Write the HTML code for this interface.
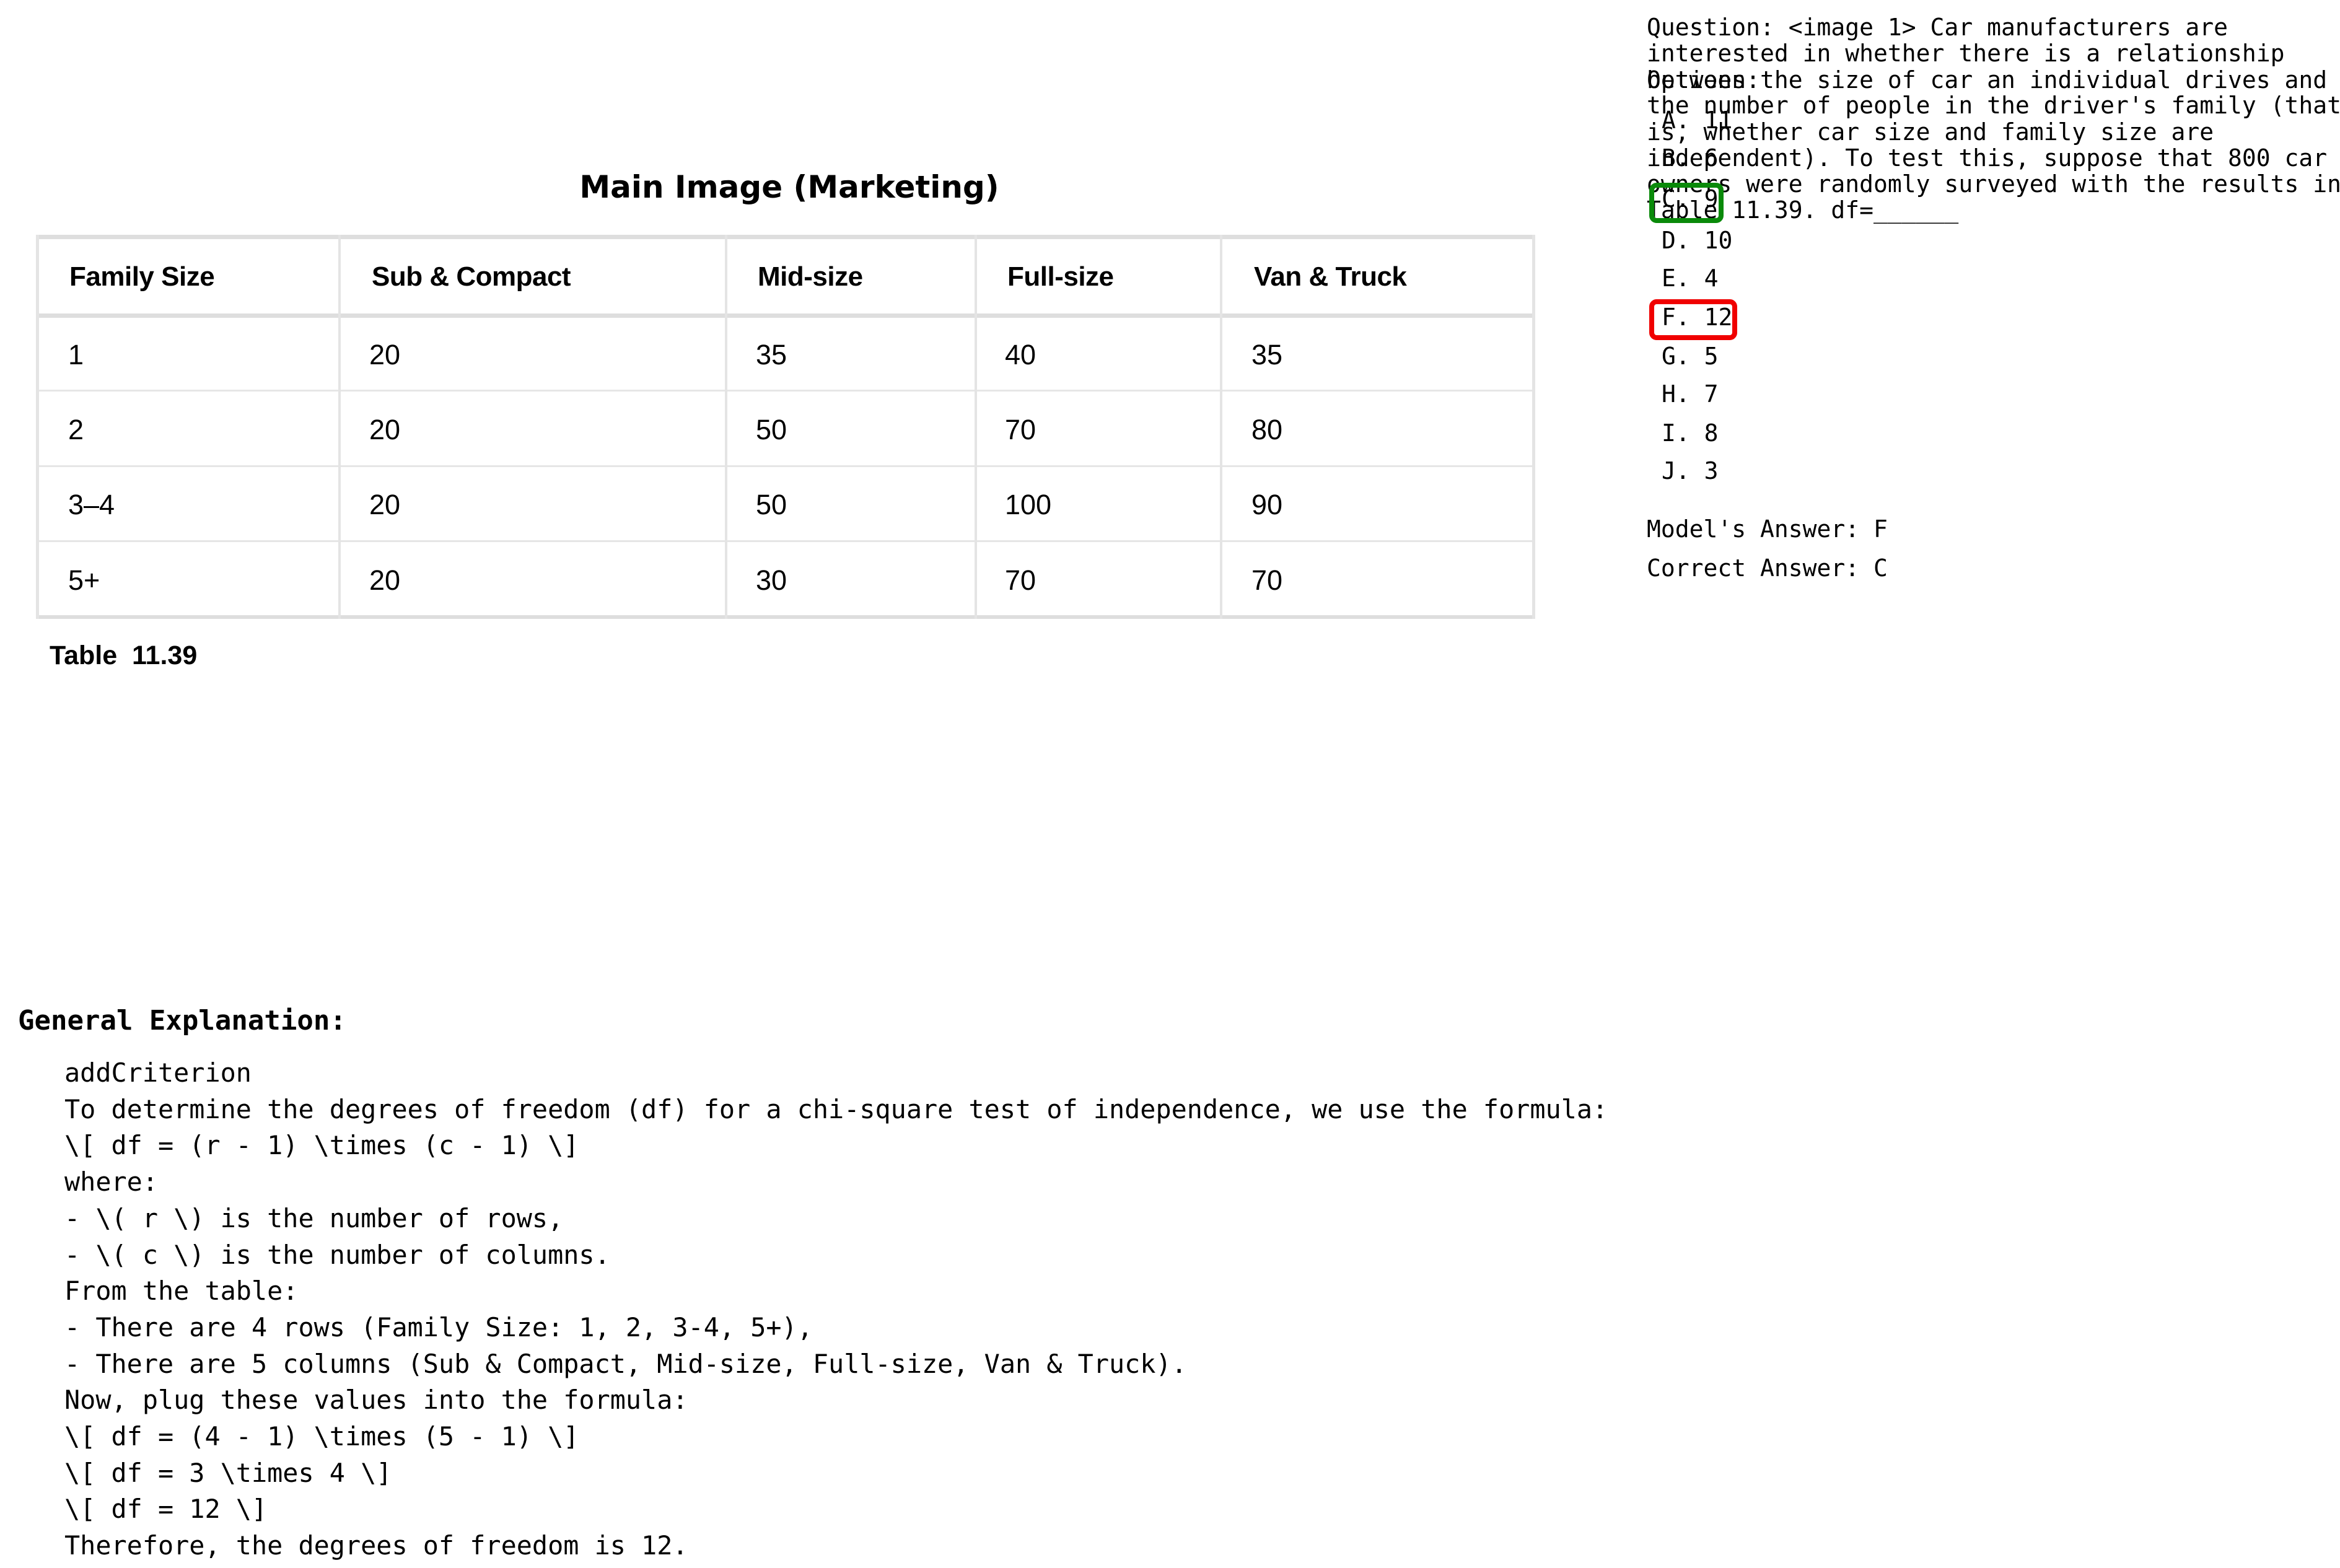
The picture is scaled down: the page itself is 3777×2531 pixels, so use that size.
<!DOCTYPE html>
<html><head><meta charset="utf-8"><style>
html,body{margin:0;padding:0;background:#fff;}
body{width:3777px;height:2531px;position:relative;overflow:hidden;color:#000;}
.a{position:absolute;white-space:pre;}
.m{font-family:"DejaVu Sans Mono","Liberation Mono",monospace;}
.t{font-family:"Liberation Sans",Arial,sans-serif;}
.hl{position:absolute;background:#dedede;}
.vl{position:absolute;background:#e4e4e4;}
.q{font-size:38px;line-height:42px;left:2658px;}
.o{font-size:38px;line-height:62px;left:2682px;}
.e{font-size:41.8px;line-height:58.7px;left:104px;}
.h{font-size:44px;font-weight:bold;line-height:60px;letter-spacing:-0.5px;}
.d{font-size:45px;line-height:60px;}
</style></head><body>
<div class="a" style="left:0;width:2548px;top:271px;text-align:center;font-family:'DejaVu Sans',sans-serif;font-weight:bold;font-size:50px;line-height:62px;">Main Image (Marketing)</div>

<div class="hl" style="left:58px;top:379px;width:2420px;height:7px;"></div>
<div class="hl" style="left:58px;top:506px;width:2420px;height:7px;"></div>
<div class="hl" style="left:58px;top:629px;width:2420px;height:3px;background:#e6e6e6"></div>
<div class="hl" style="left:58px;top:751px;width:2420px;height:3px;background:#e6e6e6"></div>
<div class="hl" style="left:58px;top:872px;width:2420px;height:3px;background:#e6e6e6"></div>
<div class="hl" style="left:58px;top:993px;width:2420px;height:6px;"></div>
<div class="vl" style="left:58px;top:379px;width:5px;height:620px;"></div>
<div class="vl" style="left:546px;top:379px;width:4px;height:620px;"></div>
<div class="vl" style="left:1170px;top:379px;width:4px;height:620px;"></div>
<div class="vl" style="left:1573px;top:379px;width:4px;height:620px;"></div>
<div class="vl" style="left:1969px;top:379px;width:4px;height:620px;"></div>
<div class="vl" style="left:2473px;top:379px;width:5px;height:620px;"></div>

<div class="a t h" style="left:112px;top:417px;">Family Size</div>
<div class="a t h" style="left:600px;top:417px;">Sub &amp; Compact</div>
<div class="a t h" style="left:1223px;top:417px;">Mid-size</div>
<div class="a t h" style="left:1626px;top:417px;">Full-size</div>
<div class="a t h" style="left:2024px;top:417px;">Van &amp; Truck</div>

<div class="a t d" style="left:110px;top:543px;">1</div>
<div class="a t d" style="left:596px;top:543px;">20</div>
<div class="a t d" style="left:1220px;top:543px;">35</div>
<div class="a t d" style="left:1622px;top:543px;">40</div>
<div class="a t d" style="left:2020px;top:543px;">35</div>

<div class="a t d" style="left:110px;top:664px;">2</div>
<div class="a t d" style="left:596px;top:664px;">20</div>
<div class="a t d" style="left:1220px;top:664px;">50</div>
<div class="a t d" style="left:1622px;top:664px;">70</div>
<div class="a t d" style="left:2020px;top:664px;">80</div>

<div class="a t d" style="left:110px;top:785px;">3–4</div>
<div class="a t d" style="left:596px;top:785px;">20</div>
<div class="a t d" style="left:1220px;top:785px;">50</div>
<div class="a t d" style="left:1622px;top:785px;">100</div>
<div class="a t d" style="left:2020px;top:785px;">90</div>

<div class="a t d" style="left:110px;top:907px;">5+</div>
<div class="a t d" style="left:596px;top:907px;">20</div>
<div class="a t d" style="left:1220px;top:907px;">30</div>
<div class="a t d" style="left:1622px;top:907px;">70</div>
<div class="a t d" style="left:2020px;top:907px;">70</div>

<div class="a t" style="left:80px;top:1030px;font-size:43px;font-weight:bold;line-height:56px;">Table  11.39</div>

<div class="a m q" style="top:23px;">Question: &lt;image 1&gt; Car manufacturers are</div>
<div class="a m q" style="top:65px;">interested in whether there is a relationship</div>
<div class="a m q" style="top:108px;">between the size of car an individual drives and</div>
<div class="a m q" style="top:149px;">the number of people in the driver's family (that</div>
<div class="a m q" style="top:192px;">is, whether car size and family size are</div>
<div class="a m q" style="top:234px;">independent). To test this, suppose that 800 car</div>
<div class="a m q" style="top:276px;">owners were randomly surveyed with the results in</div>
<div class="a m q" style="top:318px;">Table 11.39. df=______</div>

<div class="a m q" style="top:108px;">Options:</div>
<div class="a m o" style="top:163px;">A. 11</div>
<div class="a m o" style="top:224px;">B. 6</div>
<div class="a m o" style="top:290px;">C. 9</div>
<div class="a m o" style="top:357px;">D. 10</div>
<div class="a m o" style="top:418px;">E. 4</div>
<div class="a m o" style="top:481px;">F. 12</div>
<div class="a m o" style="top:544px;">G. 5</div>
<div class="a m o" style="top:605px;">H. 7</div>
<div class="a m o" style="top:668px;">I. 8</div>
<div class="a m o" style="top:729px;">J. 3</div>
<div class="a" style="left:2662px;top:295px;width:104px;height:49px;border:8px solid #0a8a0a;border-radius:12px;"></div>
<div class="a" style="left:2662px;top:483px;width:126px;height:50px;border:8px solid #f00000;border-radius:12px;"></div>

<div class="a m q" style="top:833px;">Model's Answer: F</div>
<div class="a m q" style="top:896px;">Correct Answer: C</div>

<div class="a m" style="left:29px;top:1622px;font-size:44px;line-height:52px;font-weight:bold;">General Explanation:</div>
<div class="a m e" style="top:1703px;">addCriterion
To determine the degrees of freedom (df) for a chi-square test of independence, we use the formula:
\[ df = (r - 1) \times (c - 1) \]
where:
- \( r \) is the number of rows,
- \( c \) is the number of columns.
From the table:
- There are 4 rows (Family Size: 1, 2, 3-4, 5+),
- There are 5 columns (Sub &amp; Compact, Mid-size, Full-size, Van &amp; Truck).
Now, plug these values into the formula:
\[ df = (4 - 1) \times (5 - 1) \]
\[ df = 3 \times 4 \]
\[ df = 12 \]
Therefore, the degrees of freedom is 12.</div>
</body></html>
